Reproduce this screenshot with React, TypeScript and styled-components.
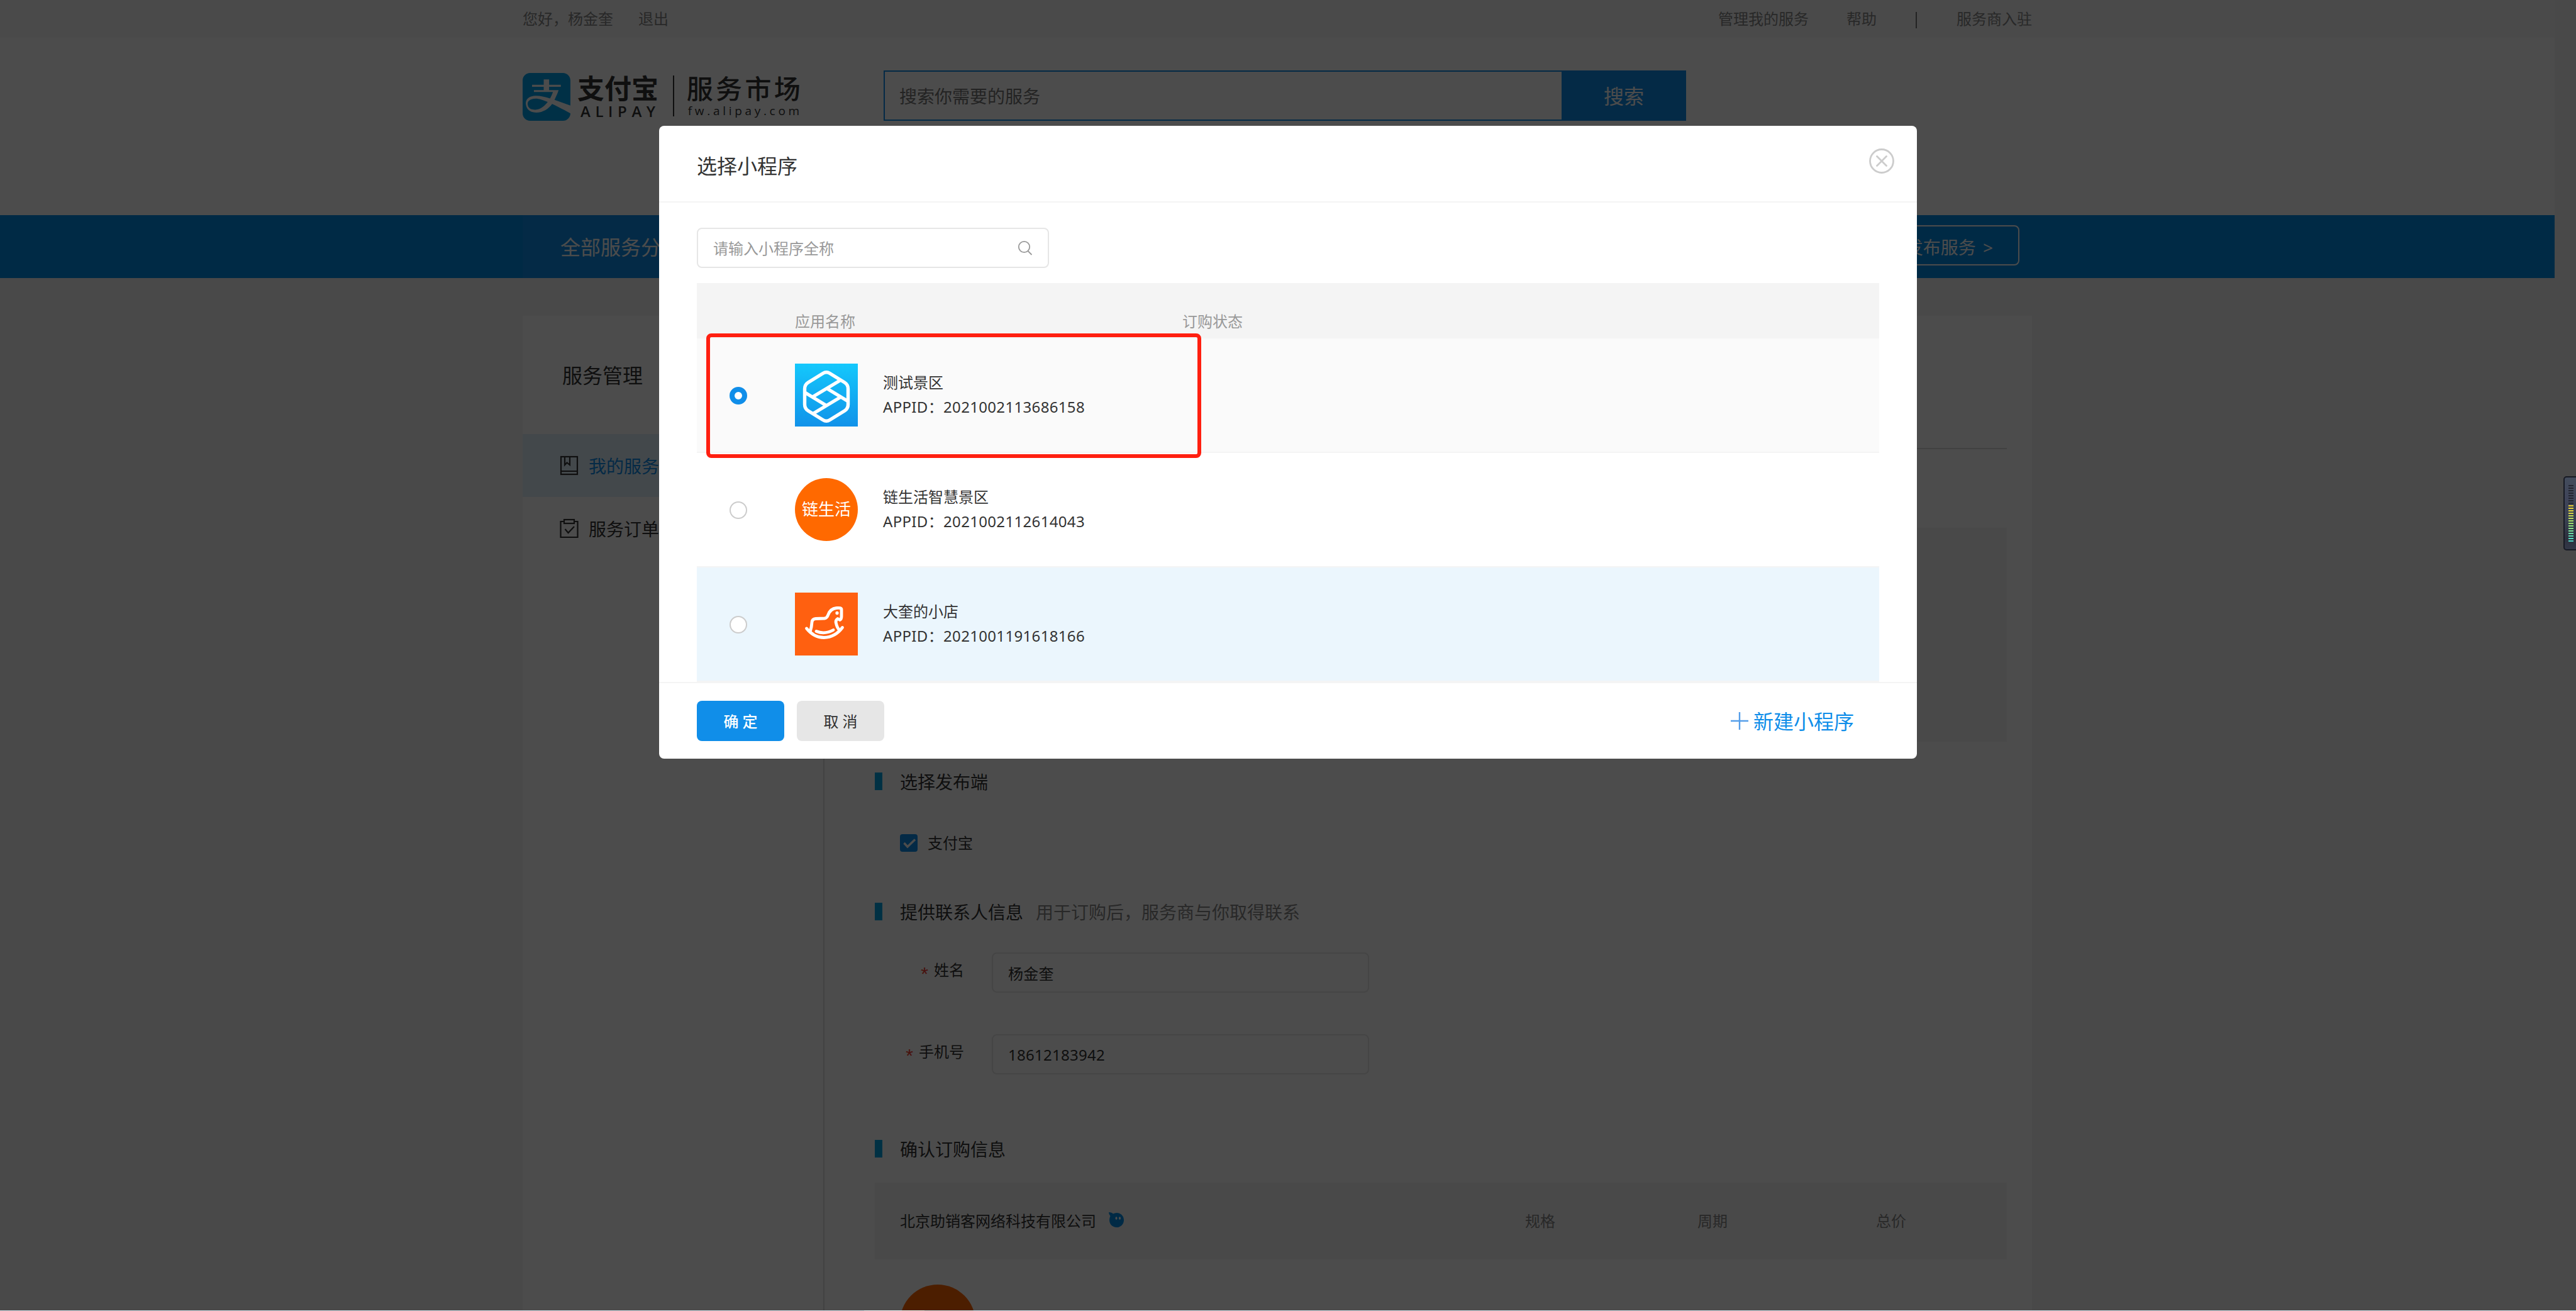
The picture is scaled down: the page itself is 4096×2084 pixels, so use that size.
import React from "react";
import styled, { createGlobalStyle, css } from "styled-components";
import { FaAlipay } from "react-icons/fa";

const sans = `"Noto Sans", "Noto Sans CJK SC", sans-serif`;

const GlobalStyle = createGlobalStyle`
  *, *::before, *::after { box-sizing: border-box; }
  html, body { margin: 0; padding: 0; background: #f5f5f5; }
  body { font-family: ${sans}; font-size: 24px; color: #333; overflow: hidden; }
  button, input { font: inherit; color: inherit; }
  input::placeholder { color: inherit; opacity: 1; }
  svg { display: block; flex: none; }
`;

const Screen = styled.div`
  position: relative;
  width: 4096px;
  height: 2084px;
  overflow: hidden;
  background: #f5f5f5;
`;

const Page = styled.div`
  width: 4062px;
  height: 2084px;
  display: flex;
  flex-direction: column;
  overflow: hidden;
`;

const Container = styled.div`
  width: 2400px;
  margin: 0 auto;
  display: flex;
  align-items: center;
`;

/* ---------- top bar ---------- */

const TopBar = styled.div`
  flex: none;
  height: 60px;
  display: flex;
  background: #f7f7f7;
  color: #888;
  line-height: 60px;
`;

const TopLinks = styled.div<{ $gap: number }>`
  display: flex;
  gap: ${(p) => p.$gap}px;
  &:last-child { margin-left: auto; }
`;

const TopSeparator = styled.span`
  width: 2px;
  height: 26px;
  margin: 19px 3px 0 2px;
  background: #777;
`;

/* ---------- header ---------- */

const Header = styled.header`
  flex: none;
  height: 282px;
  background: #fff;
`;

const HeaderInner = styled(Container)`
  align-items: flex-start;
  padding-top: 52px;
`;

const Logo = styled.div`
  display: flex;
  width: 574px;
  padding-top: 4px;
  color: #333;
  white-space: nowrap;
`;

const LogoMark = styled(FaAlipay)`
  width: 76px;
  height: 76px;
  color: #00a0e9;
`;

const LogoNames = styled.div<{ $left: number }>`
  display: flex;
  flex-direction: column;
  margin-left: ${(p) => p.$left}px;
`;

const LogoBrand = styled.span`
  font-size: 43px;
  font-weight: 700;
  line-height: 50px;
`;

const LogoLatin = styled.span`
  margin: 1px 0 0 5px;
  font-family: "Open Sans", sans-serif;
  font-size: 24px;
  font-weight: 600;
  line-height: 20px;
  letter-spacing: 7.6px;
`;

const LogoRule = styled.span`
  width: 2px;
  height: 65px;
  margin: 4px 0 0 20px;
  background: #333;
`;

const LogoMarket = styled.span`
  font-size: 42px;
  font-weight: 500;
  line-height: 50px;
  letter-spacing: 4.4px;
`;

const LogoDomain = styled.span`
  font-family: "Open Sans", sans-serif;
  font-size: 19px;
  line-height: 20px;
  letter-spacing: 4.7px;
  margin-left: 2px;
`;

const SiteSearch = styled.div`
  display: flex;
  width: 1276px;
  height: 80px;
`;

const SiteSearchInput = styled.input`
  flex: 1;
  border: 2px solid #108ee9;
  border-right: 0;
  border-radius: 0;
  padding: 2px 24px 0 23px;
  background: #fff;
  color: #777;
  font-size: 28px;
`;

const SiteSearchButton = styled.button`
  width: 198px;
  padding: 0 0 2px;
  border: 0;
  background: #108ee9;
  color: #fff;
  font-size: 32px;
`;

/* ---------- blue navigation ---------- */

const Nav = styled.nav`
  flex: none;
  height: 100px;
  display: flex;
  background: #008ce6;
  color: #fff;
`;

const NavInner = styled(Container)`
  justify-content: space-between;
  padding-right: 20px;
`;

const Categories = styled.div`
  width: 400px;
  padding: 2px 0 0 60px;
  line-height: 98px;
  background: #108ee9;
  font-size: 32px;
`;

const PublishButton = styled.button`
  height: 64px;
  padding: 3px 40px 0;
  margin-bottom: 4px;
  border: 2px solid #fff;
  border-radius: 8px;
  background: transparent;
  font-size: 28px;
  word-spacing: 4px;
`;

/* ---------- body ---------- */

const Card = styled.div`
  display: flex;
  width: 2400px;
  height: 1700px;
  margin: 60px auto 0;
  flex: none;
  background: #fff;
`;

const Sidebar = styled.aside`
  width: 480px;
  border-right: 2px solid #dcdcdc;
`;

const SidebarTitle = styled.h2`
  height: 188px;
  margin: 0;
  padding-left: 63px;
  font-size: 32px;
  font-weight: 400;
  line-height: 190px;
`;

const SidebarItem = styled.div<{ $active?: boolean }>`
  display: flex;
  align-items: center;
  gap: 16px;
  height: 100px;
  padding-left: 59px;
  font-size: 28px;
  background: ${(p) => (p.$active ? "#e2f0fb" : "transparent")};
`;

const SidebarLabel = styled.span<{ $active?: boolean }>`
  padding-bottom: 1px;
  color: ${(p) => (p.$active ? "#108ee9" : "#333")};
`;

const Main = styled.main`
  width: 1880px;
  margin-right: 40px;
  padding-left: 80px;
  display: flex;
  flex-direction: column;
`;

const TitleArea = styled.div`
  height: 212px;
  border-bottom: 2px solid #d9d9d9;
`;

const SummaryBlock = styled.div`
  height: 340px;
  margin-top: 125px;
  background: #f4f4f4;
`;

const Section = styled.section<{ $top: number }>`
  margin-top: ${(p) => p.$top}px;
`;

const SectionTitle = styled.h3`
  display: flex;
  align-items: center;
  height: 28px;
  margin: 0;
  font-size: 28px;
  font-weight: 400;
  line-height: 28px;
  &::before {
    content: "";
    width: 12px;
    height: 28px;
    margin-right: 28px;
    background: #00a5e3;
  }
`;

const SectionText = styled.span`
  padding-top: 1px;
`;

const SectionHint = styled(SectionText)`
  margin-left: 20px;
  color: #888;
`;

const CheckRow = styled.label`
  display: flex;
  align-items: center;
  gap: 16px;
  height: 28px;
  margin: 70px 0 0 40px;
  line-height: 26px;
`;

const CheckBox = styled.span`
  display: flex;
  width: 28px;
  height: 28px;
  border-radius: 4px;
  background: #108ee9;
`;

const FormRow = styled.div<{ $top: number }>`
  display: flex;
  align-items: center;
  height: 64px;
  margin-top: ${(p) => p.$top}px;
`;

const FieldLabel = styled.label`
  width: 142px;
  margin-right: 44px;
  padding-bottom: 6px;
  text-align: right;
`;

const Required = styled.span`
  margin-right: 9px;
  font-family: "Liberation Sans", sans-serif;
  font-size: 30px;
  line-height: 1;
  vertical-align: -7px;
  color: #f04134;
`;

const Field = styled.input`
  width: 600px;
  height: 64px;
  padding: 0 24px;
  border: 2px solid #e6e6e6;
  border-radius: 8px;
  background: transparent;
  letter-spacing: 0.26px;
`;

const OrderHeader = styled.div`
  display: grid;
  grid-template-columns: 1034px 274px 284px 1fr;
  align-items: center;
  height: 122px;
  margin-top: 40px;
  padding-bottom: 4px;
  background: #f4f4f4;
  color: #888;
`;

const Vendor = styled.div`
  display: flex;
  align-items: center;
  gap: 20px;
  padding-left: 40px;
  color: #333;
`;

const VendorLogo = styled.div`
  width: 120px;
  height: 120px;
  margin: 40px 0 0 40px;
  border-radius: 50%;
  background: #ff6600;
`;

/* ---------- overlay and dialog ---------- */

const Overlay = styled.div`
  position: absolute;
  inset: 0;
  display: flex;
  justify-content: center;
  align-items: flex-start;
  padding-top: 200px;
  background: rgba(0, 0, 0, 0.7);
`;

const Dialog = styled.div`
  position: relative;
  width: 2000px;
  height: 1006px;
  display: flex;
  flex-direction: column;
  border-radius: 8px;
  background: #fff;
`;

const DialogHeader = styled.div`
  display: flex;
  justify-content: space-between;
  flex: none;
  height: 122px;
  padding: 0 36px 0 60px;
  border-bottom: 2px solid #f4f4f4;
`;

const DialogTitle = styled.h1`
  margin: 0;
  font-size: 32px;
  font-weight: 400;
  line-height: 128px;
`;

const CloseIcon = styled.svg`
  margin-top: 36px;
`;

const DialogBody = styled.div`
  flex: 1;
  padding: 40px 60px 0;
`;

const AppSearch = styled.div`
  display: flex;
  align-items: center;
  width: 560px;
  height: 64px;
  padding: 0 24px;
  border: 2px solid #e6e6e6;
  border-radius: 8px;
  color: #999;
`;

const AppSearchInput = styled.input`
  flex: 1;
  padding: 0;
  border: 0;
  background: transparent;
`;

const AppTable = styled.div`
  width: 1880px;
  margin-top: 24px;
`;

const tableColumns = css`
  display: grid;
  grid-template-columns: 156px 616px 1fr;
  align-items: center;
`;

const AppTableHead = styled.div`
  ${tableColumns}
  height: 88px;
  padding-top: 31px;
  background: #f4f4f4;
  color: #999;
`;

const AppRow = styled.div<{ $bg: string }>`
  ${tableColumns}
  height: 182px;
  border-bottom: 2px solid #f4f4f4;
  background: ${(p) => p.$bg};
`;

const Radio = styled.span<{ $checked?: boolean }>`
  width: 28px;
  height: 28px;
  margin: 2px 0 0 52px;
  border-radius: 50%;
  background: #fff;
  border: ${(p) => (p.$checked ? "8px solid #108ee9" : "2px solid #ccc")};
`;

const AppCell = styled.div`
  display: flex;
  align-items: center;
  gap: 40px;
`;

const AppText = styled.div`
  display: flex;
  flex-direction: column;
  line-height: 39px;
  padding-bottom: 2px;
  white-space: nowrap;
`;

const AppId = styled.span`
  letter-spacing: 0.33px;
`;

const RoundLogo = styled.div`
  width: 100px;
  height: 100px;
  border-radius: 50%;
  background: #ff6900;
  color: #fff;
  font-size: 26px;
  line-height: 99px;
  text-align: center;
`;

const DialogFooter = styled.div`
  display: flex;
  align-items: center;
  flex: none;
  height: 122px;
  padding: 0 100px 0 60px;
  gap: 20px;
  border-top: 2px solid #f4f4f4;
`;

const FooterButton = styled.button<{ $primary?: boolean }>`
  width: 139px;
  height: 64px;
  padding: 0 0 1px;
  border: 0;
  border-radius: 8px;
  background: ${(p) => (p.$primary ? "#108ee9" : "#e6e6e6")};
  color: ${(p) => (p.$primary ? "#fff" : "#333")};
  font-weight: ${(p) => (p.$primary ? 500 : 400)};
`;

const CreateLink = styled.a`
  display: flex;
  align-items: center;
  gap: 8px;
  margin-left: auto;
  color: #108ee9;
  font-size: 32px;
  line-height: 40px;
`;

const CreateText = styled.span`
  padding-top: 2px;
`;

const Highlight = styled.div`
  position: absolute;
  left: 75px;
  top: 330px;
  width: 787px;
  height: 198px;
  border: 6.5px solid #ff1f10;
  border-radius: 8px;
`;

/* ---------- desktop leftovers ---------- */

const Meter = styled.div`
  position: absolute;
  left: 4076px;
  top: 757px;
  width: 24px;
  height: 118px;
  padding: 12px 0 0 6px;
  display: flex;
  flex-direction: column;
  gap: 2px;
  border: 2px solid #171a24;
  border-radius: 5px;
  background: linear-gradient(#434c5c, #3f4459 30%, #394050 60%, #2d303e 85%, #333848);
`;

const MeterBar = styled.span<{ $color: string }>`
  width: 8px;
  height: 2px;
  background: ${(p) => p.$color};
`;

const TaskbarEdge = styled.div`
  position: absolute;
  left: 0;
  right: 0;
  bottom: 0;
  height: 1px;
  background: linear-gradient(90deg, #d6e0ea 1374px, #f5f8fb 1374px, #f5f8fb 1470px, #d6e0ea 1470px);
`;

const meterColors = [
  ...Array(8).fill("#232530"),
  "#e6cb31", "#e4d036", "#e0d43c", "#d8d846", "#c8da50", "#b8dc5c", "#aade66", "#9edf70",
  "#92e07c", "#86df8a", "#7adf98", "#6cdca6", "#5fdab0", "#55d8bc", "#4fd6c6",
];

const BookIcon = () => (
  <svg width="30" height="32" viewBox="0 0 30 32" fill="none" stroke="#333" strokeWidth="2.2">
    <rect x="2" y="2" width="26" height="28" />
    <path d="M2 25H28M8 2V15L11.5 11.5L16 15V2" />
  </svg>
);

const ClipboardIcon = () => (
  <svg width="30" height="32" viewBox="0 0 30 32" fill="none" stroke="#333" strokeWidth="2.2">
    <path d="M7 5H1.5V30H28.5V5H23" />
    <rect x="7" y="2" width="16" height="6" />
    <path d="M8.5 17L13.5 23L23 13" />
  </svg>
);

const HexLogo = () => (
  <svg width="100" height="100" viewBox="0 0 100 100">
    <defs>
      <linearGradient id="hexSky" x1="0" y1="0" x2="0" y2="1">
        <stop offset="0" stopColor="#14c8fc" />
        <stop offset="1" stopColor="#1192e9" />
      </linearGradient>
    </defs>
    <rect width="100" height="100" fill="url(#hexSky)" />
    <g fill="none" stroke="#fff" strokeWidth="5.4">
      <path d="M44.5 15.5Q50 12 55.5 15.5L79 30Q84.5 33.5 84.5 40V65Q84.5 71.5 79 75L55.5 89.5Q50 93 44.5 89.5L21 75Q15.5 71.5 15.5 65V40Q15.5 33.5 21 30Z" />
      <path d="M16 46L50.5 67M28 53L73 26M50 39L84.5 60M73 53L28 80" />
    </g>
  </svg>
);

const HorseLogo = () => (
  <svg width="100" height="100" viewBox="0 0 100 100">
    <rect width="100" height="100" fill="#ff6010" />
    <g fill="none" stroke="#fff" strokeWidth="4.8" strokeLinecap="round" strokeLinejoin="round">
      <path d="M24.5 61Q26.5 55 27 47Q27.5 42 33 41.5L47 41Q51 40.500 52.500 36Q56 25.500 66 24.500Q74 23.500 74 27V38Q74 42 71.500 43.500L68 41.500Q64 44 65.500 49Q67 56 71 60" />
      <path d="M18.500 57Q30 71.500 46 71.500Q64 71 75.500 55.500" />
      <path d="M34 61.500Q47 67 61 59.500" />
    </g>
    <ellipse cx="67" cy="32.500" rx="2.600" ry="2.800" fill="#fff" />
  </svg>
);

const ChatIcon = () => (
  <svg width="24" height="24" viewBox="0 0 24 24">
    <path d="M0 0Q5 0 7 2.500Q9.500 1 12.500 1C19 1 24 6 24 12.500S19 24 12.500 24S1 19 1 12.500Q1 9 2.500 6Q0 3 0 0Z" fill="#008ee6" />
    <ellipse cx="12" cy="9.500" rx="1.500" ry="2.300" fill="#fff" />
    <ellipse cx="17.500" cy="9.500" rx="1.500" ry="2.300" fill="#fff" />
  </svg>
);

const apps = [
  { name: "测试景区", id: "2021002113686158", bg: "#fafafa", checked: true, logo: <HexLogo /> },
  { name: "链生活智慧景区", id: "2021002112614043", bg: "#fff", checked: false, logo: <RoundLogo>链生活</RoundLogo> },
  { name: "大奎的小店", id: "2021001191618166", bg: "#ebf6fd", checked: false, logo: <HorseLogo /> },
];

export default function App() {
  return (
    <Screen>
      <GlobalStyle />
      <Page>
        <TopBar>
          <Container>
            <TopLinks $gap={40}>
              <span>您好，杨金奎</span>
              <span>退出</span>
            </TopLinks>
            <TopLinks $gap={60}>
              <span>管理我的服务</span>
              <span>帮助</span>
              <TopSeparator />
              <span>服务商入驻</span>
            </TopLinks>
          </Container>
        </TopBar>
        <Header>
          <HeaderInner>
            <Logo>
              <LogoMark viewBox="0 32 448 448" />
              <LogoNames $left={11}>
                <LogoBrand>支付宝</LogoBrand>
                <LogoLatin>ALIPAY</LogoLatin>
              </LogoNames>
              <LogoRule />
              <LogoNames $left={20}>
                <LogoMarket>服务市场</LogoMarket>
                <LogoDomain>fw.alipay.com</LogoDomain>
              </LogoNames>
            </Logo>
            <SiteSearch>
              <SiteSearchInput placeholder="搜索你需要的服务" />
              <SiteSearchButton>搜索</SiteSearchButton>
            </SiteSearch>
          </HeaderInner>
        </Header>
        <Nav>
          <NavInner>
            <Categories>全部服务分类</Categories>
            <PublishButton>发布服务 &gt;</PublishButton>
          </NavInner>
        </Nav>
        <Card>
          <Sidebar>
            <SidebarTitle>服务管理</SidebarTitle>
            <SidebarItem $active>
              <BookIcon />
              <SidebarLabel $active>我的服务</SidebarLabel>
            </SidebarItem>
            <SidebarItem>
              <ClipboardIcon />
              <SidebarLabel>服务订单</SidebarLabel>
            </SidebarItem>
          </Sidebar>
          <Main>
            <TitleArea />
            <SummaryBlock />
            <Section $top={49}>
              <SectionTitle>
                <SectionText>选择发布端</SectionText>
              </SectionTitle>
              <CheckRow>
                <CheckBox>
                  <svg width="28" height="28" viewBox="0 0 28 28" fill="none" stroke="#fff" strokeWidth="3.4">
                    <path d="M6.5 14L12 20L24 8.5" />
                  </svg>
                </CheckBox>
                支付宝
              </CheckRow>
            </Section>
            <Section $top={81}>
              <SectionTitle>
                <SectionText>提供联系人信息</SectionText>
                <SectionHint>用于订购后，服务商与你取得联系</SectionHint>
              </SectionTitle>
              <FormRow $top={51}>
                <FieldLabel><Required>*</Required>姓名</FieldLabel>
                <Field defaultValue="杨金奎" />
              </FormRow>
              <FormRow $top={66}>
                <FieldLabel><Required>*</Required>手机号</FieldLabel>
                <Field defaultValue="18612183942" />
              </FormRow>
            </Section>
            <Section $top={104}>
              <SectionTitle>
                <SectionText>确认订购信息</SectionText>
              </SectionTitle>
              <OrderHeader>
                <Vendor>
                  北京助销客网络科技有限公司
                  <ChatIcon />
                </Vendor>
                <span>规格</span>
                <span>周期</span>
                <span>总价</span>
              </OrderHeader>
              <VendorLogo />
            </Section>
          </Main>
        </Card>
      </Page>

      <Overlay>
        <Dialog>
          <DialogHeader>
            <DialogTitle>选择小程序</DialogTitle>
            <CloseIcon width="40" height="40" viewBox="0 0 40 40" fill="none" stroke="#ccc" strokeWidth="2.8" strokeLinecap="round">
              <circle cx="20" cy="20" r="18.5" />
              <path d="M12.5 12.5L27.5 27.5M27.5 12.5L12.5 27.5" />
            </CloseIcon>
          </DialogHeader>
          <DialogBody>
            <AppSearch>
              <AppSearchInput placeholder="请输入小程序全称" />
              <svg width="24" height="24" viewBox="0 0 24 24" fill="none" stroke="#999" strokeWidth="1.8">
                <circle cx="10.500" cy="10.500" r="8.700" />
                <path d="M16.5 17L22.5 23" />
              </svg>
            </AppSearch>
            <AppTable>
              <AppTableHead>
                <span />
                <span>应用名称</span>
                <span>订购状态</span>
              </AppTableHead>
              {apps.map((app) => (
                <AppRow key={app.id} $bg={app.bg}>
                  <Radio $checked={app.checked} />
                  <AppCell>
                    {app.logo}
                    <AppText>
                      <span>{app.name}</span>
                      <AppId>APPID：{app.id}</AppId>
                    </AppText>
                  </AppCell>
                </AppRow>
              ))}
            </AppTable>
          </DialogBody>
          <DialogFooter>
            <FooterButton $primary>确 定</FooterButton>
            <FooterButton>取 消</FooterButton>
            <CreateLink>
              <svg width="28" height="28" viewBox="0 0 28 28" stroke="#559ee9" strokeWidth="2.4">
                <path d="M0 14H28M14 0V28" />
              </svg>
              <CreateText>新建小程序</CreateText>
            </CreateLink>
          </DialogFooter>
          <Highlight />
        </Dialog>
      </Overlay>

      <Meter>
        {meterColors.map((color, i) => (
          <MeterBar key={i} $color={color} />
        ))}
      </Meter>
      <TaskbarEdge />
    </Screen>
  );
}
